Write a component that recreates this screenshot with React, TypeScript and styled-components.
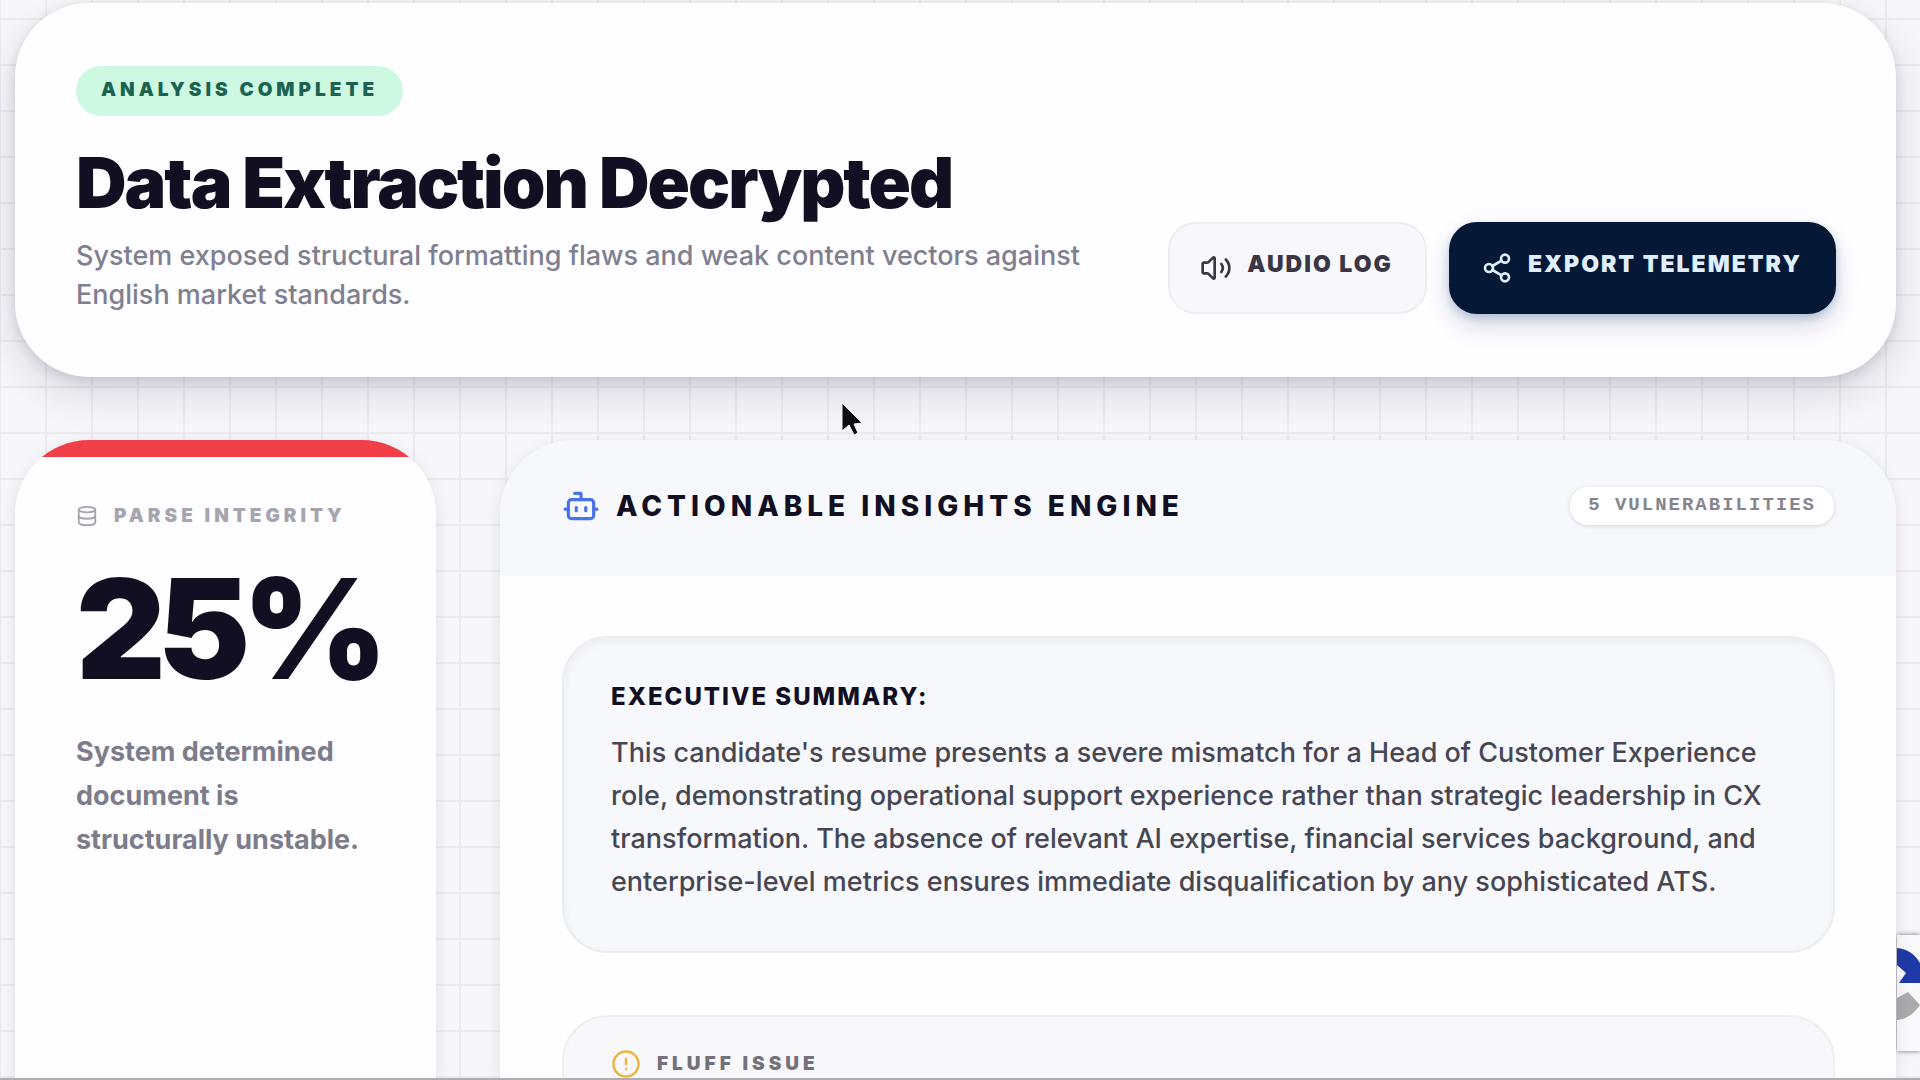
import React from "react";
import styled, { createGlobalStyle, css } from "styled-components";
import { Volume2, Share2, Database, Bot, CircleAlert } from "lucide-react";

const sans = `Inter, "Liberation Sans", sans-serif`;
const mono = `"Liberation Mono", "DejaVu Sans Mono", monospace`;

const GlobalStyle = createGlobalStyle`
  *, *::before, *::after { box-sizing: border-box; }
  html, body { margin: 0; padding: 0; }
  body {
    height: 100vh;
    overflow: hidden;
    font-family: ${sans};
    background-color: #f8f7fb;
    color: #120f22;
  }
  h1, h2, h3, p { margin: 0; }
`;

const Page = styled.div`
  position: relative;
  height: 100vh;
  overflow: hidden;
  padding: 3px 24px 0 15px;
  display: flex;
  flex-direction: column;
  gap: 63px;
  border-bottom: 2px solid #aeadb1;
  background-color: #f7f6fa;
  background-image:
    linear-gradient(to right, #ebeaef 2px, transparent 2px),
    linear-gradient(to bottom, #ebeaef 2px, transparent 2px);
  background-size: 46px 46px;
  background-position: -1px 18px;
`;

const cardSurface = css`
  position: relative;
  z-index: 1;
  background: #fefdff;
  border-radius: 74px;
`;

const HeroCard = styled.header`
  ${cardSurface}
  z-index: 2;
  flex: none;
  display: flex;
  align-items: flex-end;
  justify-content: space-between;
  gap: 60px;
  padding: 63px 60px 63px 61px;
  box-shadow: 0 16px 40px rgba(30, 20, 50, 0.14), 0 4px 12px rgba(30, 20, 50, 0.12);
`;

const HeroText = styled.div`
  display: flex;
  flex-direction: column;
  align-items: flex-start;
  max-width: 1020px;
`;

const StatusBadge = styled.span`
  padding: 0 25px 2px;
  border-radius: 25px;
  background: #cdf8e1;
  color: #1b6350;
  font-size: 19px;
  font-weight: 900;
  line-height: 48px;
  letter-spacing: 4px;
  text-transform: uppercase;
`;

const Title = styled.h1`
  margin-top: 32px;
  font-size: 70px;
  font-weight: 900;
  line-height: 70px;
  letter-spacing: -2px;
`;

const Subtitle = styled.p`
  margin-top: 18px;
  font-size: 27px;
  font-weight: 500;
  line-height: 39px;
  color: #7f808f;
`;

const Actions = styled.div`
  flex: none;
  display: flex;
  gap: 22px;
`;

const ActionButton = styled.button<{ $dark?: boolean }>`
  display: flex;
  align-items: center;
  gap: 15px;
  height: 92px;
  padding: 0 32px 0 30px;
  border: 2px solid ${(p) => (p.$dark ? "#051937" : "#eeecf3")};
  border-radius: 28px;
  background: ${(p) => (p.$dark ? "#051937" : "#f8f7fc")};
  color: ${(p) => (p.$dark ? "#e0efff" : "#3a3643")};
  box-shadow: ${(p) => (p.$dark ? "0 12px 24px rgba(20, 40, 90, 0.16), 0 4px 8px rgba(40, 90, 170, 0.24)" : "none")};
  font-family: ${sans};
  font-size: 23px;
  font-weight: 900;
  line-height: 28px;
  letter-spacing: 2px;
  text-transform: uppercase;

  span { padding-bottom: 8px; }
`;

const Columns = styled.main`
  flex: 1;
  min-height: 0;
  display: grid;
  grid-template-columns: 421px minmax(0, 1fr);
  gap: 64px;
`;

const ScoreCard = styled.section`
  ${cardSurface}
  overflow: hidden;
  border-radius: 74px 74px 0 0;
  box-shadow: 0 4px 16px rgba(30, 20, 50, 0.1);
`;

const AlertStripe = styled.div`
  height: 17px;
  background: #f03f48;
`;

const ScoreBody = styled.div`
  display: flex;
  flex-direction: column;
  padding: 46px 48px 0 61px;
`;

const ScoreLabel = styled.h2`
  display: flex;
  align-items: center;
  gap: 16px;
  font-size: 19px;
  font-weight: 900;
  line-height: 26px;
  letter-spacing: 4px;
  text-transform: uppercase;
  white-space: nowrap;
  color: #a5a4af;
`;

const ScoreValue = styled.p`
  margin-top: 30px;
  font-size: 139px;
  font-weight: 900;
  line-height: 139px;
  letter-spacing: -8px;
`;

const ScoreNote = styled.p`
  margin-top: 32px;
  font-size: 27px;
  font-weight: 700;
  line-height: 44px;
  color: #7d7c8a;
`;

const InsightsPanel = styled.section`
  ${cardSurface}
  overflow: hidden;
  border-radius: 74px 74px 0 0;
  box-shadow: 0 4px 16px rgba(30, 20, 50, 0.1);
`;

const PanelHeader = styled.div`
  display: flex;
  align-items: center;
  justify-content: space-between;
  height: 136px;
  padding: 0 62px 4px;
  background: #f7f8fb;
`;

const PanelTitle = styled.h2`
  display: flex;
  align-items: center;
  gap: 16px;
  font-size: 28px;
  font-weight: 800;
  line-height: 34px;
  letter-spacing: 5px;
  text-transform: uppercase;

  svg { color: #4a72e8; }
`;

const CountPill = styled.span`
  padding: 0 18px 2px;
  border-radius: 18px;
  background: #ffffff;
  box-shadow: 0 1px 4px rgba(30, 20, 50, 0.16);
  font-family: ${mono};
  font-size: 19px;
  font-weight: 700;
  line-height: 36px;
  letter-spacing: 2px;
  text-transform: uppercase;
  color: #85848d;
`;

const PanelBody = styled.div`
  display: flex;
  flex-direction: column;
  gap: 62px;
  padding: 60px 61px 0 62px;
`;

const SummaryCard = styled.article`
  padding: 42px 47px 48px;
  border: 2px solid #edecf1;
  border-radius: 46px;
  background: #f7f8fc;
  box-shadow: inset 0 4px 8px rgba(30, 20, 50, 0.05);
`;

const SummaryTitle = styled.h3`
  font-size: 24px;
  font-weight: 800;
  line-height: 34px;
  letter-spacing: 2px;
  text-transform: uppercase;
`;

const SummaryText = styled.p`
  margin-top: 17px;
  font-size: 27px;
  font-weight: 500;
  line-height: 43px;
  color: #474653;
`;

const IssueCard = styled.article`
  height: 300px;
  padding: 32px 47px;
  border: 2px solid #efeef3;
  border-radius: 46px;
  background: #f8f8fb;
`;

const IssueTitle = styled.h3`
  display: flex;
  align-items: center;
  gap: 16px;
  font-size: 19px;
  font-weight: 900;
  line-height: 28px;
  letter-spacing: 4px;
  text-transform: uppercase;
  color: #73717b;

  svg { color: #eeb345; }
`;

const CaptchaBadge = styled.aside`
  position: absolute;
  right: 0;
  top: 935px;
  z-index: 0;
  width: 23px;
  height: 116px;
  background: #f9f8fb;
  box-shadow: 0 0 5px rgba(60, 60, 60, 0.7);

  svg { display: block; }
`;

const Pointer = styled.svg`
  position: absolute;
  left: 840px;
  top: 401px;
  z-index: 5;
`;

export default function App() {
  return (
    <>
      <GlobalStyle />
      <Page>
        <HeroCard>
          <HeroText>
            <StatusBadge>Analysis Complete</StatusBadge>
            <Title>Data Extraction Decrypted</Title>
            <Subtitle>
              System exposed structural formatting flaws and weak content vectors against English market standards.
            </Subtitle>
          </HeroText>
          <Actions>
            <ActionButton type="button">
              <Volume2 size={32} strokeWidth={2} aria-hidden />
              <span>Audio Log</span>
            </ActionButton>
            <ActionButton type="button" $dark>
              <Share2 size={32} strokeWidth={2} aria-hidden />
              <span>Export Telemetry</span>
            </ActionButton>
          </Actions>
        </HeroCard>

        <Columns>
          <ScoreCard>
            <AlertStripe />
            <ScoreBody>
              <ScoreLabel>
                <Database size={22} strokeWidth={2} aria-hidden />
                Parse Integrity
              </ScoreLabel>
              <ScoreValue>25%</ScoreValue>
              <ScoreNote>System determined document is structurally unstable.</ScoreNote>
            </ScoreBody>
          </ScoreCard>

          <InsightsPanel>
            <PanelHeader>
              <PanelTitle>
                <Bot size={38} strokeWidth={2} aria-hidden />
                Actionable Insights Engine
              </PanelTitle>
              <CountPill>5 Vulnerabilities</CountPill>
            </PanelHeader>
            <PanelBody>
              <SummaryCard>
                <SummaryTitle>Executive Summary:</SummaryTitle>
                <SummaryText>
                  This candidate's resume presents a severe mismatch for a Head of Customer Experience role,
                  demonstrating operational support experience rather than strategic leadership in CX
                  transformation. The absence of relevant AI expertise, financial services background, and
                  enterprise-level metrics ensures immediate disqualification by any sophisticated ATS.
                </SummaryText>
              </SummaryCard>
              <IssueCard>
                <IssueTitle>
                  <CircleAlert size={30} strokeWidth={2} aria-hidden />
                  Fluff Issue
                </IssueTitle>
              </IssueCard>
            </PanelBody>
          </InsightsPanel>
        </Columns>

        <CaptchaBadge aria-hidden>
          <svg width="23" height="116" viewBox="0 0 23 116">
            <path d="M0 13 C10 14 18 19 23 28 V48 H2 L9 38 L0 30 Z" fill="#1f3aa8" />
            <path d="M0 63 L11 57 L23 70 C16 80 9 84 0 85 Z" fill="#ababae" />
          </svg>
        </CaptchaBadge>
        <Pointer width="24" height="36" viewBox="0 0 24 36" aria-hidden>
          <path d="M2 2 V30 L9 24 L14 34 L18 32 L14 23 L22 22 Z" fill="#0c0b10" stroke="#f4f3f7" strokeWidth="1" />
        </Pointer>
      </Page>
    </>
  );
}
